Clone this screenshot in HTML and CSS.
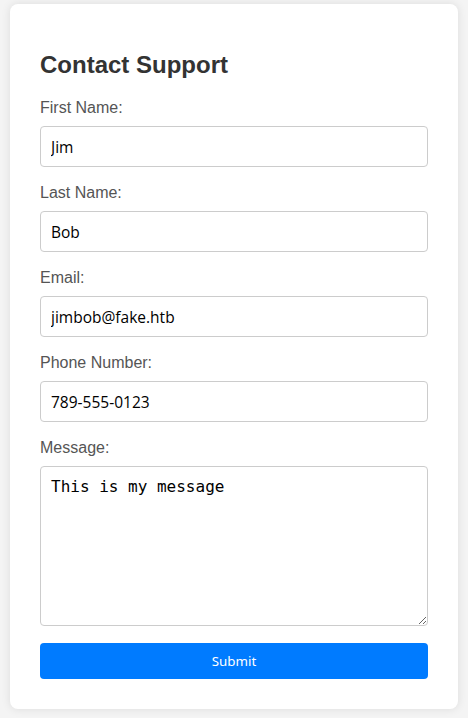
FILE: index.html
```html
<!DOCTYPE html>
<html>
<head>
<meta charset="utf-8">
<link rel="stylesheet" href="styles.css">
</head>
<body>
<div class="card">
  <h2 class="title">Contact Support</h2>
  <form class="form">
    <label class="label" for="fn">First Name:</label>
    <input class="field" id="fn" type="text" value="Jim">
    <label class="label" for="ln">Last Name:</label>
    <input class="field" id="ln" type="text" value="Bob">
    <label class="label" for="em">Email:</label>
    <input class="field" id="em" type="text" value="jimbob@fake.htb">
    <label class="label" for="ph">Phone Number:</label>
    <input class="field" id="ph" type="text" value="789-555-0123">
    <label class="label" for="msg">Message:</label>
    <textarea class="area" id="msg">This is my message</textarea>
    <button class="submit" type="button">Submit</button>
  </form>
</div>
</body>
</html>
```
FILE: styles.css
```css
html, body {
  margin: 0;
  padding: 0;
}
body {
  background: #f4f4f4;
  font-family: "Liberation Sans", Arial, sans-serif;
  padding: 4px 10px 8px 10px;
}
.card {
  background: #fff;
  border-radius: 8px;
  box-shadow: 0 0 10px rgba(0, 0, 0, 0.1);
  padding: 30px;
}
.title {
  margin: 17px 0 20px 0;
  font-size: 24px;
  font-weight: bold;
  color: #333;
  line-height: 28px;
}
.form {
  display: flex;
  flex-direction: column;
}
.label {
  display: block;
  font-size: 16px;
  line-height: 18px;
  color: #555;
  margin-bottom: 9px;
}
.field, .area {
  box-sizing: border-box;
  width: 100%;
  border: 1px solid #ccc;
  border-radius: 4px;
  padding: 10px;
  margin: 0 0 17px 0;
  background: #fff;
  color: #000;
}
.field {
  height: 41px;
  font-family: "Open Sans", "Noto Sans", sans-serif;
  font-size: 15.5px;
}
.area {
  height: 160px;
  font-family: "DejaVu Sans Mono", monospace;
  font-size: 16px;
  resize: vertical;
}
.submit {
  height: 36px;
  border: none;
  border-radius: 4px;
  background: #007bff;
  color: #fff;
  font-family: "Noto Sans", sans-serif;
  font-size: 13.33px;
  cursor: pointer;
}
```
